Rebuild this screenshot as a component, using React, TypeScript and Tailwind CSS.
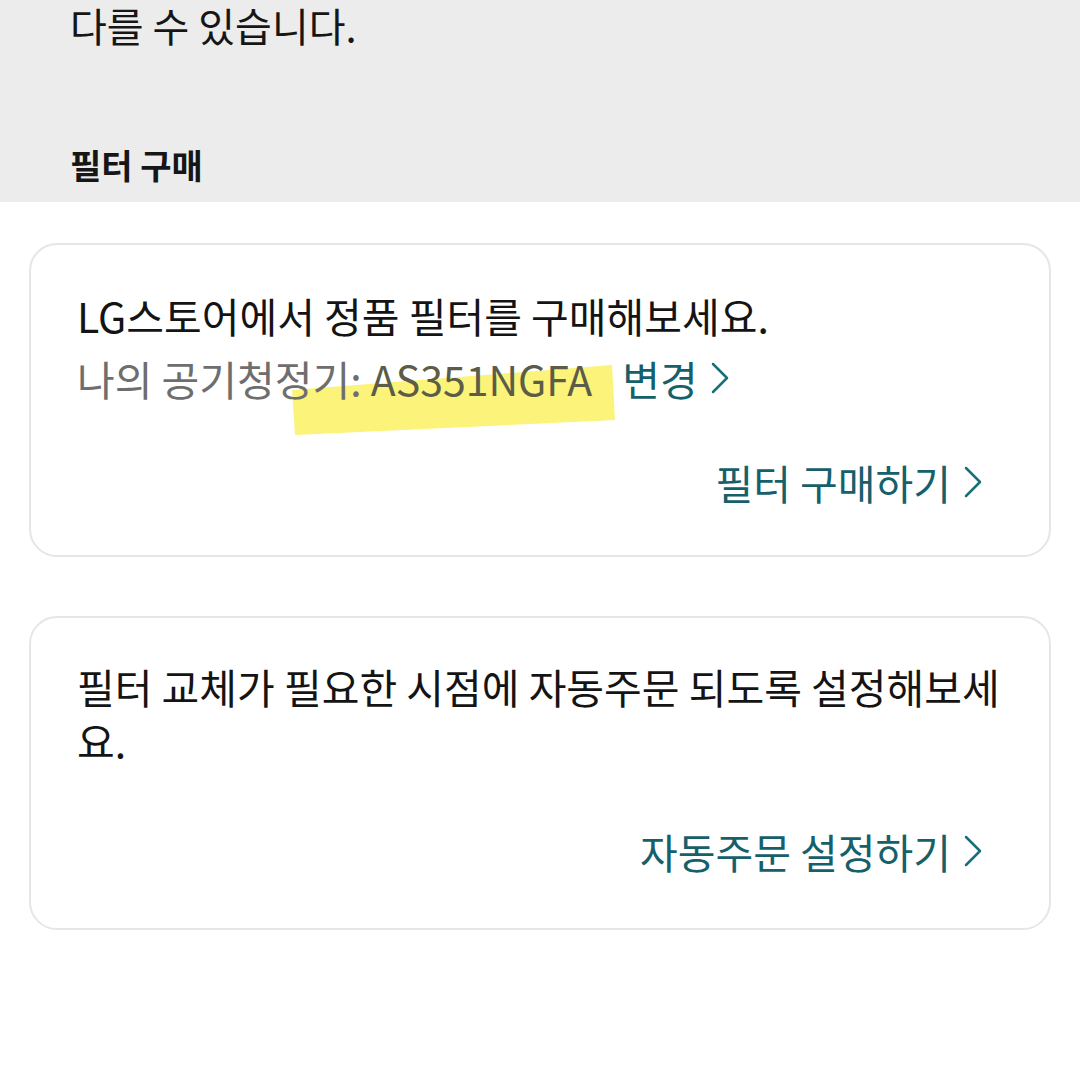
import React from "react";

const font = { fontFamily: '"Noto Sans CJK KR", "Noto Sans", sans-serif' };

function Chevron() {
  return (
    <svg width="20" height="34" viewBox="0 0 20 34" className="ml-[12px] inline-block" fill="none">
      <path d="M3 3 L17 17 L3 31" stroke="#16707a" strokeWidth="2.5" strokeLinecap="round" strokeLinejoin="round" />
    </svg>
  );
}

function LinkText({ text }: { text: string }) {
  return (
    <span className="inline-flex items-center text-[#15606b]">
      {text}
      <Chevron />
    </span>
  );
}

export default function App() {
  return (
    <div className="w-[1080px] h-[1080px] bg-white overflow-hidden text-[#141414]" style={font}>
      <div className="bg-[#ececec] h-[202px] px-[70px]">
        <div className="text-[40px] leading-[50px] text-[#161616]">다를 수 있습니다.</div>
        <div className="text-[34px] leading-[40px] font-bold mt-[95px] text-[#161616]">필터 구매</div>
      </div>

      <div className="px-[29px] pt-[41px] flex flex-col gap-[59px]">
        <div className="relative h-[314px] rounded-[28px] border-2 border-[#e6e6e6] pl-[46px] pr-[66px] pt-[43px] flex flex-col">
          <svg className="absolute left-0 top-0 pointer-events-none" width="600" height="200" viewBox="0 0 600 200">
            <polygon points="261,145 581,120 584,175 264,190" fill="#fbf37a" />
          </svg>
          <div className="relative text-[41px] leading-[54px] whitespace-nowrap">LG스토어에서 정품 필터를 구매해보세요.</div>
          <div className="relative mt-[9px] text-[41px] leading-[54px] text-[#6e6e6e] flex items-center whitespace-nowrap">
            <span>나의 공기청정기: <span className="text-[#5c5c48]">AS351NGFA</span></span>
            <span className="ml-[30px]"><LinkText text="변경" /></span>
          </div>
          <div className="relative mt-auto mb-[46px] flex justify-end text-[41px] leading-[54px] whitespace-nowrap">
            <LinkText text="필터 구매하기" />
          </div>
        </div>

        <div className="h-[314px] rounded-[28px] border-2 border-[#e6e6e6] pl-[46px] pr-[66px] pt-[41px] flex flex-col">
          <div className="text-[41px] leading-[54px] whitespace-nowrap">필터 교체가 필요한 시점에 자동주문 되도록 설정해보세<br />요.</div>
          <div className="mt-auto mb-[50px] flex justify-end text-[41px] leading-[54px] whitespace-nowrap">
            <LinkText text="자동주문 설정하기" />
          </div>
        </div>
      </div>
    </div>
  );
}
